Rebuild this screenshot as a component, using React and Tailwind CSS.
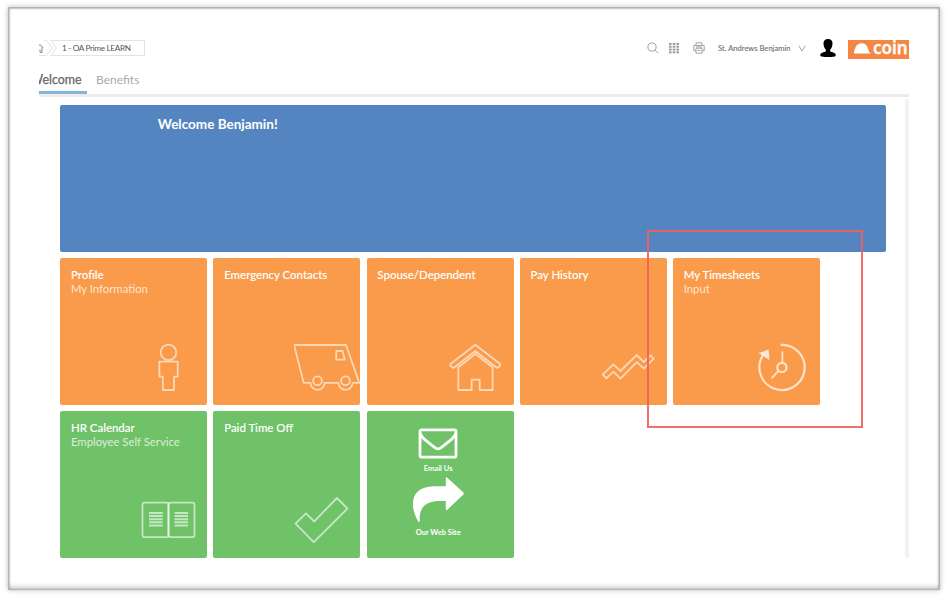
import React from "react";

function TileIcon({ x, y, children }) {
  return (
    <svg
      className="mt-auto h-[67px] w-[66px] shrink-0 self-end fill-none stroke-white/60"
      viewBox={`${x} ${y} 66 67`}
      strokeWidth="1.8"
      strokeLinejoin="round"
    >
      {children}
    </svg>
  );
}

function Tile({ title, subtitle, green, children }) {
  return (
    <div
      className={`flex h-[147px] w-[147px] shrink-0 flex-col overflow-hidden rounded-xs ${
        green ? "bg-[#6fc268]" : "bg-[#f99b4a]"
      }`}
    >
      <div className="h-[40px] pt-[10px] pl-[10.7px] leading-[14px] whitespace-nowrap">
        <div className="text-[11.45px] font-medium text-white [-webkit-text-stroke:0.1px_white]">{title}</div>
        <div className="text-[11.3px] text-white/75">{subtitle}</div>
      </div>
      {children}
    </div>
  );
}

const pageLines = [0, 1, 2, 3, 4];

export default function App() {
  return (
    <div className="h-[598px] w-[949px] overflow-hidden bg-white pt-[7px] pl-[8px] font-['Lato',sans-serif]">
      <div className="relative h-[583px] w-[932px] border border-[#b4b4b4] bg-white pt-[30px] pl-[30px] shadow-[0_0_5px_rgba(0,0,0,0.28),inset_0_-5px_4px_-2px_rgba(0,0,0,0.16),inset_-1px_0_2px_rgba(0,0,0,0.2),inset_1px_1px_2px_rgba(0,0,0,0.2)]">
        <div className="w-[870px] overflow-hidden">
          <header className="flex h-[22px] items-center">
            <svg className="-mt-[2px] h-[18px] w-[110px] shrink-0 fill-none stroke-[#e2e2e2]" viewBox="39 39 110 18" strokeWidth="1">
              <path d="M44 40.5H46.5L52 48L46.5 55.5H39M51 40.5H144.5V55.5H51L56.5 48Z" />
              <path className="stroke-[#888]" d="M37 48L40 44.5L43 48M42 47.5V52.5H40V49.5" />
              <text x="62" y="51.2" className="fill-[#555] stroke-none text-[8.2px]" textLength="69">1 - OA Prime LEARN</text>
            </svg>
            <div className="-mt-[2px] ml-[498px] flex items-center">
              <svg className="h-[12px] w-[12px] fill-none stroke-[#999]" viewBox="0 0 12 12" strokeWidth="0.9">
                <circle cx="5" cy="5" r="4.1" />
                <path d="M8 8L11.3 11.3" />
              </svg>
              <svg className="ml-[10px] h-[11px] w-[10px] fill-[#999]" viewBox="0 0 10 11">
                {[0, 2.8, 5.6, 8.4].map((y) =>
                  [0, 3.7, 7.4].map((x) => <rect key={`${x}-${y}`} x={x} y={y} width="2.6" height="1.9" />)
                )}
              </svg>
              <svg className="ml-[14px] h-[12px] w-[12px] fill-none stroke-[#999]" viewBox="0 0 12 12" strokeWidth="0.9">
                <path d="M3 3.5V0.8H9V3.5M3 8.8H0.8V3.5H11.2V8.8H9M3 6.2H9V11.2H3ZM4.5 8.5H7.5M3 5H9" />
              </svg>
              <div className="ml-[13px] w-[74px] text-[7.6px] leading-[10px] whitespace-nowrap text-[#777] [-webkit-text-stroke:0.15px_#777]">
                St. Andrews Benjamin
              </div>
              <svg className="ml-[6px] h-[7px] w-[8px] fill-none stroke-[#999]" viewBox="0 0 8 7" strokeWidth="0.9">
                <path d="M0.8 0.8L4 6L7.2 0.8" />
              </svg>
              <svg className="ml-[14px] h-[18px] w-[16px] fill-black" viewBox="0 0 16 18">
                <path d="M8 0C5 0 3.5 1.7 3.5 4.5C3.5 7 4.4 9.3 5.8 10.6V12.4C4 13.2 0.5 13.6 0.2 15.8C0 18 3 18 8 18S16 18 15.8 15.8C15.5 13.6 12 13.2 10.2 12.4V10.6C11.6 9.3 12.5 7 12.5 4.5C12.5 1.7 11 0 8 0Z" />
              </svg>
            </div>
            <div className="ml-[12px] flex h-[19px] w-[61px] shrink-0 bg-[#f58745]">
              <svg className="mt-[3px] ml-[6px] h-[11px] w-[17px] shrink-0 fill-white" viewBox="0 0 17 11">
                <path d="M0 10.6C0.6 4.5 3 0.3 7.5 0.3C11 0.3 13.2 2.2 14.2 6.2C14.7 8.4 15.3 9.3 17 10.6Z" />
              </svg>
              <div className="ml-[2px] font-['Noto_Sans',sans-serif] text-[17px] leading-[16px] font-semibold text-white [-webkit-text-stroke:0.3px_white]">
                coin
              </div>
            </div>
          </header>

          <nav className="flex h-[34px] text-[12px]">
            <div className="flex w-[48px] justify-end border-b-3 border-[#83b6d8] pt-[10px] pr-[5.5px]">
              <div className="text-[12.4px] leading-[20px] text-[#666] [-webkit-text-stroke:0.25px_#666]">Welcome</div>
            </div>
            <div className="ml-[9px] pt-[10px] leading-[20px] text-[#aaa]">Benefits</div>
          </nav>
          <div className="h-[3px] bg-[#ececec]" />

          <div className="mt-[2px] flex h-[459px] justify-between">
            <main className="pt-[6px] pl-[21.3px]">
              <section className="h-[147px] w-[826px] rounded-xs bg-[#5485c0] pt-[9px] pl-[97.5px] text-[13.5px] leading-[20px] font-bold text-white">
                Welcome Benjamin!
              </section>
              <div className="mt-[6.3px] flex gap-[6.2px]">
                <Tile title="Profile" subtitle="My Information">
                  <TileIcon x={141.3} y={338.3}>
                    <circle cx="168.8" cy="352.7" r="7.8" />
                    <path d="M159.7 361.9H178V377H174.3V390.3H163.2V377H159.7Z" />
                  </TileIcon>
                </Tile>
                <Tile title="Emergency Contacts">
                  <TileIcon x={294.5} y={338.3}>
                    <path d="M295 345.3H346.5L359.8 383.2H353A7 7 0 0 1 339 383.2H325A7 7 0 0 1 311 383.2H304.2L294.6 345.3Z" />
                    <circle cx="318" cy="381" r="4.4" />
                    <circle cx="346" cy="381" r="4.4" />
                    <path d="M336.7 351.3H343L345.4 360H336.7Z" />
                  </TileIcon>
                </Tile>
                <Tile title="Spouse/Dependent">
                  <TileIcon x={447.7} y={338.3}>
                    <path d="M475 345L499.2 363.8Q500.8 365.2 499 367Q497.3 368.8 495.5 367.3L475 351.3L454.5 367.3Q452.7 368.8 451 367Q449.2 365.2 450.8 363.8Z" />
                    <path d="M458 367.6L475 354.3L492.3 367.6V390.3H479.4V380H471.3V390.3H458Z" />
                  </TileIcon>
                </Tile>
                <Tile title="Pay History">
                  <TileIcon x={600.9} y={338.3}>
                    <path d="M602.7 374.7L613.3 364.7L620.3 371.3L636.7 355.3L643.7 362.3L650.3 355.7L653.7 359L643.7 369L636.7 362.5L620.3 379L613.3 372L606.3 378.7Z" />
                  </TileIcon>
                </Tile>
                <Tile title="My Timesheets" subtitle="Input">
                  <TileIcon x={754.1} y={338.3}>
                    <g strokeWidth="2.2" className="stroke-white/70">
                      <path d="M780.7 345.2A22.6 22.6 0 1 1 763.8 354.5" />
                      <path strokeWidth="1.8" d="M782.5 351.7V363M778.8 371L771.7 378.7" />
                      <circle cx="782" cy="367.7" r="4.6" />
                    </g>
                    <path className="fill-white/75 stroke-none" d="M758.5 353.4L768.8 349.9L769.5 360.3Z" />
                  </TileIcon>
                </Tile>
              </div>
              <div className="mt-[6.2px] flex gap-[6.2px]">
                <Tile green title="HR Calendar" subtitle="Employee Self Service">
                  <TileIcon x={141.3} y={491.5}>
                    <rect x="142.8" y="503.2" width="26" height="34.4" rx="2" />
                    <rect x="168.8" y="503.2" width="26" height="34.4" rx="2" />
                    {pageLines.map((n) => (
                      <path key={n} d={`M149.3 ${513.5 + n * 3.1}H163M174.8 ${513.5 + n * 3.1}H188.4`} strokeWidth="2" />
                    ))}
                  </TileIcon>
                </Tile>
                <Tile green title="Paid Time Off">
                  <TileIcon x={294.5} y={491.5}>
                    <path d="M296 524.2L306.5 513.8L314.7 522L337.4 498.5L348 509L314.3 542.6Z" />
                  </TileIcon>
                </Tile>
                <div className="flex h-[147px] w-[147px] flex-col items-center rounded-xs bg-[#6fc268] pt-[17px] pr-[4px] text-[7.5px] leading-[10px] font-bold text-white">
                  <svg className="h-[31px] w-[40px] fill-none stroke-white" viewBox="0 0 40 31" strokeWidth="2.8" strokeLinejoin="round">
                    <rect x="2" y="1.9" width="36" height="27.2" rx="1.5" />
                    <path d="M2 5Q3 8.5 6.5 11.3L16.5 19.3Q20 22.5 23.5 19.3L33.5 11.3Q37 8.5 38 5" />
                  </svg>
                  <div className="mt-[5px]">Email Us</div>
                  <svg className="mt-[3px] h-[46px] w-[52px] fill-white" viewBox="0 0 52 46">
                    <path d="M35 0.5L51.2 15.2Q52.2 16.5 51.2 17.8L35 33Q33.8 33.5 33.8 32V24C18 23.5 7 25.5 7.7 44Q7.5 46 6.3 44.8C-3.5 28 -1 9.5 22 9.3L33.8 9.2V1.5Q33.8 -0.3 35 0.5Z" />
                  </svg>
                  <div className="mt-[5px]">Our Web Site</div>
                </div>
              </div>
            </main>
            <div className="w-[4px] shrink-0 bg-[#f3f3f3]" />
          </div>
        </div>
        <div className="absolute top-[222px] left-[638px] h-[198px] w-[216px] border-2 border-[#ef5f5c]/90" />
      </div>
    </div>
  );
}
